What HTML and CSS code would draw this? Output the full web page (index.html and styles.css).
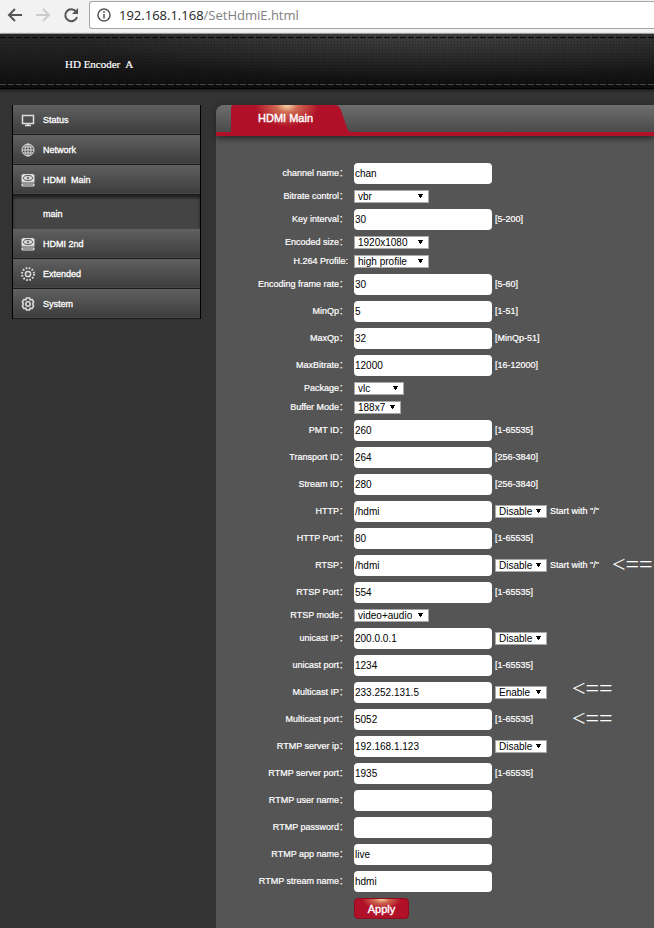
FILE: index.html
```html
<!DOCTYPE html>
<html lang="en">
  <head>
    <meta charset="UTF-8" />
    <meta name="viewport" content="width=device-width, initial-scale=1.0" />
    <title>HD Encoder A</title>
    <link rel="stylesheet" href="styles.css">
  </head>
  <body>
    <div class="toolbar">
      <button class="tool" aria-label="Back">
        <svg width="16" height="16" viewBox="0 0 16 16"><path d="M15 8H2M8 2L2 8l6 6" /></svg>
      </button>
      <button class="tool off" aria-label="Forward" disabled>
        <svg width="16" height="16" viewBox="0 0 16 16"><path d="M1 8h13M8 2l6 6-6 6" /></svg>
      </button>
      <button class="tool" aria-label="Reload">
        <svg width="16" height="16" viewBox="0 0 16 16"><path d="M13 4.500A6 6 0 1 0 14 10" /><path class="solid" d="M15 1v6H9z" /></svg>
      </button>
      <div class="address">
        <svg width="14" height="14" viewBox="0 0 14 14"><circle cx="7" cy="7" r="6" /><path d="M7 6v4.500M7 3.300v1.600" /></svg>
        <span class="host">192.168.1.168<span class="path">/SetHdmiE.html</span></span>
      </div>
    </div>
    <header class="header"><h1>HD Encoder&nbsp; A</h1></header>
    <div class="page">
      <nav class="menu">
        <a href="#"><svg width="16" height="16" viewBox="0 0 16 16"><path d="M2.500 3.500h11v8h-11zM5 13.500h6M8 11.500v2" /></svg>Status</a>
        <a href="#"><svg class="fine" width="16" height="16" viewBox="0 0 16 16"><circle cx="8" cy="8" r="6" /><ellipse cx="8" cy="8" rx="3" ry="6" /><path d="M8 2v12M2 8h12M3 5h10M3 11h10" /></svg>Network</a>
        <a href="#"><svg width="16" height="16" viewBox="0 0 16 16"><path class="fill" d="M3 2h10l1.500 1v7.500h-13V3zM1.500 11.500h13V14l-1 .5h-11l-1-.5z" /><ellipse class="dark" cx="8" cy="6" rx="4.500" ry="2.500" /><circle class="dark" cx="8" cy="6" r=".8" /><path class="dark" d="M3 13h10" /></svg>HDMI&nbsp; Main</a>
        <a class="sub" href="#">main</a>
        <a href="#"><svg width="16" height="16" viewBox="0 0 16 16"><path class="fill" d="M3 2h10l1.500 1v7.500h-13V3zM1.500 11.500h13V14l-1 .5h-11l-1-.5z" /><ellipse class="dark" cx="8" cy="6" rx="4.500" ry="2.500" /><circle class="dark" cx="8" cy="6" r=".8" /><path class="dark" d="M3 13h10" /></svg>HDMI 2nd</a>
        <a href="#"><svg width="16" height="16" viewBox="0 0 16 16"><circle cx="8" cy="8" r="2.600" /><circle class="dots" cx="8" cy="8" r="6" /></svg>Extended</a>
        <a href="#"><svg width="16" height="16" viewBox="0 0 16 16"><path d="M6.500 2h3l.7 1.800 2-.3 1.500 2.500L12.500 8l1.200 2-1.500 2.500-2-.3-.7 1.800h-3l-.7-1.800-2 .3L2.300 10l1.200-2-1.200-2 1.500-2.500 2 .3z" /><circle cx="8" cy="8" r="2.200" /></svg>System</a>
      </nav>
      <main class="panel">
        <div class="tabs">
          <svg class="tab-shape" width="122" height="27" viewBox="0 0 122 27">
            <defs>
              <radialGradient id="glow" gradientUnits="userSpaceOnUse" cx="56" cy="0" r="32" gradientTransform="scale(1 .7)">
                <stop offset="0" stop-color="#f5d8a8" />
                <stop offset=".35" stop-color="#cf6650" />
                <stop offset="1" stop-color="#b01028" />
              </radialGradient>
            </defs>
            <path fill="url(#glow)" d="M0 27V3q0-3 3-3h101q4 0 6 5l6 18q1 4 6 4z" />
          </svg>
          <h2>HDMI Main</h2>
        </div>
        <form class="form">
          <div class="row"><label for="name">channel name：</label><input id="name" value="chan"></div>
          <div class="row"><label for="bitrate">Bitrate control：</label><select id="bitrate" class="wide"><option>vbr</option></select></div>
          <div class="row"><label for="key">Key interval：</label><input id="key" value="30"><span>[5-200]</span></div>
          <div class="row"><label for="size">Encoded size：</label><select id="size" class="wide"><option>1920x1080</option></select></div>
          <div class="row"><label for="profile">H.264 Profile:</label><select id="profile" class="wide"><option>high profile</option></select></div>
          <div class="row"><label for="rate">Encoding frame rate：</label><input id="rate" value="30"><span>[5-60]</span></div>
          <div class="row"><label for="minqp">MinQp：</label><input id="minqp" value="5"><span>[1-51]</span></div>
          <div class="row"><label for="maxqp">MaxQp：</label><input id="maxqp" value="32"><span>[MinQp-51]</span></div>
          <div class="row"><label for="maxbitrate">MaxBitrate：</label><input id="maxbitrate" value="12000"><span>[16-12000]</span></div>
          <div class="row"><label for="package">Package：</label><select id="package" class="medium"><option>vlc</option></select></div>
          <div class="row"><label for="buffer">Buffer Mode：</label><select id="buffer" class="narrow"><option>188x7</option></select></div>
          <div class="row"><label for="pmt">PMT ID：</label><input id="pmt" value="260"><span>[1-65535]</span></div>
          <div class="row"><label for="transport">Transport ID：</label><input id="transport" value="264"><span>[256-3840]</span></div>
          <div class="row"><label for="stream">Stream ID：</label><input id="stream" value="280"><span>[256-3840]</span></div>
          <div class="row"><label for="http">HTTP：</label><input id="http" value="/hdmi"><select aria-label="HTTP state"><option>Disable</option></select><span>Start with "/"</span></div>
          <div class="row"><label for="httpport">HTTP Port：</label><input id="httpport" value="80"><span>[1-65535]</span></div>
          <div class="row"><label for="rtsp">RTSP：</label><input id="rtsp" value="/hdmi"><select aria-label="RTSP state"><option>Disable</option></select><span>Start with "/"</span><b class="note far">&lt;==</b></div>
          <div class="row"><label for="rtspport">RTSP Port：</label><input id="rtspport" value="554"><span>[1-65535]</span></div>
          <div class="row"><label for="rtspmode">RTSP mode：</label><select id="rtspmode" class="wide"><option>video+audio</option></select></div>
          <div class="row"><label for="uip">unicast IP：</label><input id="uip" value="200.0.0.1"><select aria-label="unicast state"><option>Disable</option></select></div>
          <div class="row"><label for="uport">unicast port：</label><input id="uport" value="1234"><span>[1-65535]</span></div>
          <div class="row"><label for="mip">Multicast IP：</label><input id="mip" value="233.252.131.5"><select aria-label="Multicast state"><option>Enable</option></select><b class="note high">&lt;==</b></div>
          <div class="row"><label for="mport">Multicast port：</label><input id="mport" value="5052"><span>[1-65535]</span><b class="note">&lt;==</b></div>
          <div class="row"><label for="sip">RTMP server ip：</label><input id="sip" value="192.168.1.123"><select aria-label="RTMP state"><option>Disable</option></select></div>
          <div class="row"><label for="sport">RTMP server port：</label><input id="sport" value="1935"><span>[1-65535]</span></div>
          <div class="row"><label for="user">RTMP user name：</label><input id="user"></div>
          <div class="row"><label for="pass">RTMP password：</label><input id="pass"></div>
          <div class="row"><label for="app">RTMP app name：</label><input id="app" value="live"></div>
          <div class="row"><label for="sname">RTMP stream name：</label><input id="sname" value="hdmi"></div>
          <button class="apply" type="button">Apply</button>
        </form>
      </main>
    </div>
  </body>
</html>
```
FILE: styles.css
```css
html,
body {
  height: 100%;
}
body {
  margin: 0;
  display: flex;
  flex-direction: column;
  overflow-x: hidden;
  background: #333;
  color: white;
  font-family: "Liberation Sans", "Noto Sans CJK SC", sans-serif;
  font-size: 9px;
}
svg {
  flex: none;
  fill: none;
  stroke: #ddd;
  stroke-width: 1.5;
}

/* browser bar */
.toolbar {
  box-sizing: border-box;
  flex: none;
  display: flex;
  align-items: center;
  gap: 12px;
  height: 34px;
  padding: 1px 0 4px 7px;
  background: #f2f2f2;
  border-bottom: 1px solid #b4bab6;
}
.tool {
  display: flex;
  padding: 0;
  border: 0;
  background: none;
}
.tool svg {
  stroke: #555;
  stroke-width: 2;
}
.tool.off svg {
  stroke: #ccc;
}
.tool .solid {
  fill: #555;
  stroke: none;
}
.address {
  box-sizing: border-box;
  flex: 1;
  display: flex;
  align-items: center;
  gap: 8px;
  height: 28px;
  margin-left: -2px;
  padding-left: 7px;
  background: white;
  border: 1px solid #a6a6a6;
  border-right: 0;
  border-radius: 3px 0 0 3px;
  color: #222;
  font: 13px "Open Sans", sans-serif;
}
.address svg {
  stroke: #555;
}
.path {
  color: #808080;
}

.header {
  position: relative;
  flex: none;
  height: 54px;
  background:
    repeating-linear-gradient(90deg, #080808 0 6px, transparent 6px 8px) 0 3px / 100% 1px no-repeat,
    repeating-linear-gradient(90deg, #444 0 6px, #111 6px 8px) 0 50px / 100% 1px no-repeat,
    radial-gradient(rgba(0, 0, 0, 0.2) 30%, transparent 60%) 0 0 / 3px 3px,
    radial-gradient(ellipse at 66% 0, rgba(255, 255, 255, 0.12), transparent 60%),
    linear-gradient(#2a2a2a, #0e0e0e);
  border-bottom: 1px solid black;
  box-shadow: 0 1px 3px #111;
}
.header h1 {
  margin: 0;
  padding: 23px 0 0 65px;
  font: 11px/14px "Liberation Serif", serif;
  -webkit-text-stroke: 0.2px white;
}

.page {
  flex: 1;
  display: flex;
  align-items: flex-start;
  gap: 15px;
  padding: 16px 0 0 12px;
}

/* side menu */
.menu {
  box-sizing: border-box;
  flex: none;
  width: 189px;
  border: solid black;
  border-width: 0 1px;
}
.menu a {
  box-sizing: border-box;
  display: flex;
  align-items: center;
  gap: 7px;
  height: 30px;
  padding-left: 7px;
  background: linear-gradient(#606060, #3c3c3c);
  border-bottom: 1px solid #1a1a1a;
  box-shadow: inset 0 -1px #484848;
  color: white;
  text-decoration: none;
  -webkit-text-stroke: 0.3px white;
}
.menu .sub {
  height: 34px;
  padding: 3px 0 0 30px;
  background: #444;
  border: 0;
  box-shadow: inset 0 3px 3px #222;
}
.menu .fine {
  stroke-width: 1;
}
.menu .fill {
  fill: #ddd;
  stroke: none;
}
.menu .dark {
  stroke: #555;
  stroke-width: 1;
}
.menu .dots {
  stroke-width: 2;
  stroke-dasharray: 1.6 1.54;
}

.panel {
  flex: 1;
  align-self: stretch;
  background: #555;
  border-radius: 8px 0 0 0;
}
.tabs {
  display: grid;
  height: 27px;
  padding-left: 15px;
  background: linear-gradient(#6e6e6e, #4a4a4a);
  border-bottom: 4px solid #b01028;
  border-radius: 8px 0 0 0;
  box-shadow: 0 2px 6px #222;
}
.tabs h2,
.tab-shape {
  grid-area: 1 / 1;
}
.tab-shape {
  stroke: none;
}
.tabs h2 {
  margin: 0;
  padding-left: 27px;
  font: 11px/27px "Liberation Sans", sans-serif;
  -webkit-text-stroke: 0.4px white;
}

.form {
  display: flex;
  flex-direction: column;
  gap: 6px;
  padding-top: 27px;
}
.row {
  position: relative;
  display: flex;
  align-items: center;
  gap: 3px;
  line-height: 13px;
  white-space: nowrap;
}
.row label {
  width: 132px;
  margin-right: 3px;
  text-align: right;
}
.row label,
.row span {
  -webkit-text-stroke: 0.2px white;
}
.row input,
.row select {
  box-sizing: border-box;
  margin: 0;
  color: black;
  font: 10px "Liberation Sans", sans-serif;
}
.row input {
  width: 138px;
  height: 21px;
  padding: 0 1px;
  background: white;
  border: 0;
  border-radius: 4px;
}
.row select {
  appearance: none;
  width: 52px;
  height: 13px;
  padding: 0 3px;
  background:
    linear-gradient(black, black) right 5px top 3px / 5px 1px no-repeat,
    linear-gradient(black, black) right 6px top 4px / 3px 2px no-repeat,
    linear-gradient(black, black) right 7px top 6px / 1px 1px no-repeat,
    white;
  border: 1px solid #a9a9a9;
  border-radius: 0;
  line-height: 11px;
}
.row .wide {
  width: 75px;
}
.row .medium {
  width: 50px;
}
.row .narrow {
  width: 47px;
}
.note {
  position: absolute;
  top: 3px;
  left: 356px;
  font: 24px/13px "Liberation Serif", serif;
}
.note.high {
  top: 0;
}
.note.far {
  left: 396px;
}

.apply {
  width: 55px;
  height: 21px;
  margin-left: 138px;
  padding: 0;
  background: radial-gradient(ellipse 20px 10px at 50% 0, #f5d8a8, #cf6650 40%, #b01028);
  border: 1px solid #900a1c;
  border-radius: 4px;
  color: white;
  font: 11px "Liberation Sans", sans-serif;
  -webkit-text-stroke: 0.4px white;
}
```
